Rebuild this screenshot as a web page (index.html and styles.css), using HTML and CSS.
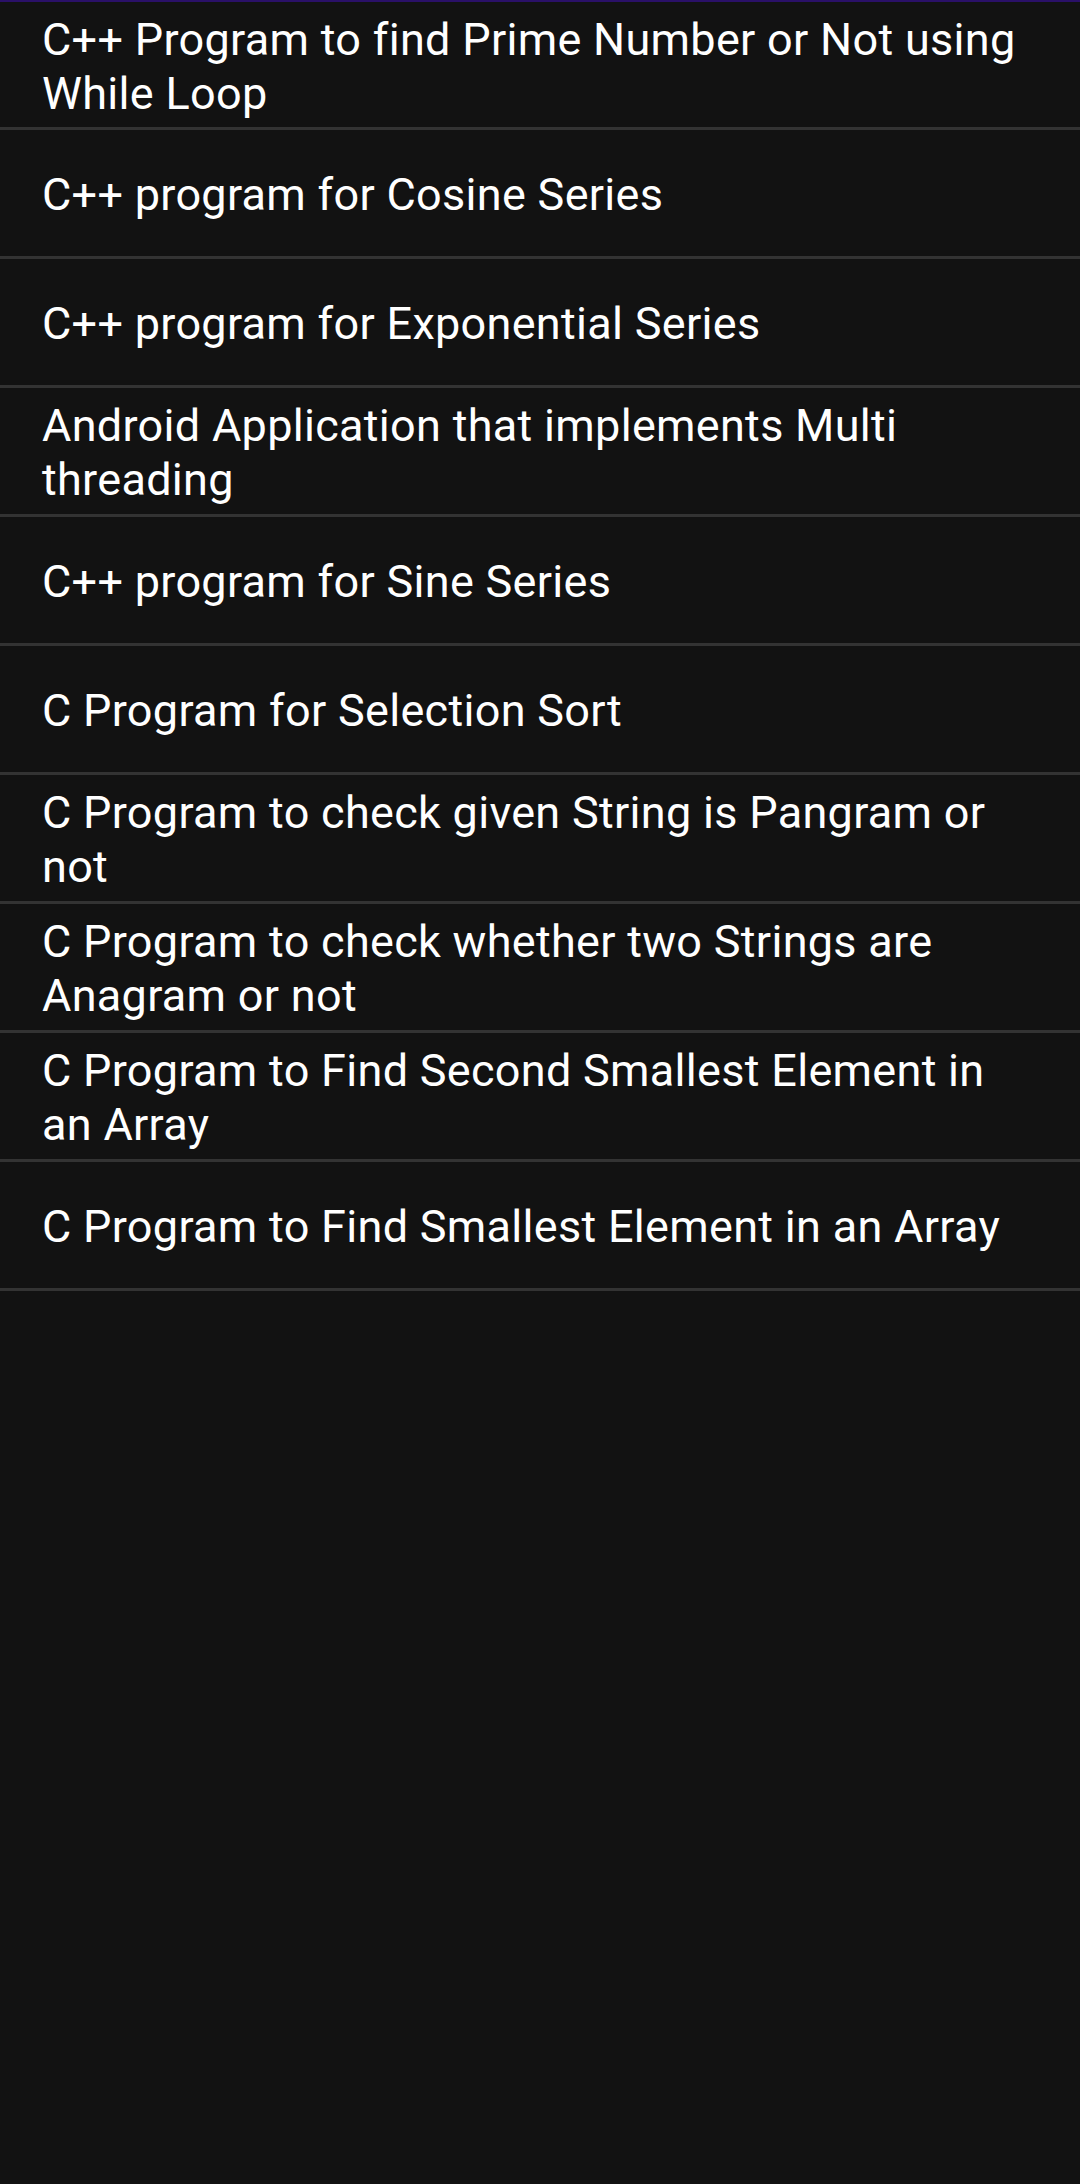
FILE: index.html
```html
<!DOCTYPE html>
<html lang="en">
<head>
<meta charset="utf-8">
<title>Programs</title>
<link rel="stylesheet" href="styles.css">
</head>
<body>
<div class="topbar"></div>
<ul class="list">
  <li class="row">C++ Program to find Prime Number or Not using While Loop</li>
  <li class="row">C++ program for Cosine Series</li>
  <li class="row">C++ program for Exponential Series</li>
  <li class="row">Android Application that implements Multi threading</li>
  <li class="row">C++ program for Sine Series</li>
  <li class="row">C Program for Selection Sort</li>
  <li class="row">C Program to check given String is Pangram or not</li>
  <li class="row">C Program to check whether two Strings are Anagram or not</li>
  <li class="row">C Program to Find Second Smallest Element in an Array</li>
  <li class="row">C Program to Find Smallest Element in an Array</li>
</ul>
</body>
</html>
```

FILE: styles.css
```css
html, body {
  margin: 0;
  padding: 0;
  background: #121212;
}
body {
  width: 1080px;
  min-height: 2184px;
  font-family: Roboto, "Noto Sans", "Liberation Sans", sans-serif;
  color: #ffffff;
}
.topbar {
  height: 2px;
  background: #2a1068;
}
.list {
  list-style: none;
  margin: 0;
  padding: 0;
}
.row {
  box-sizing: border-box;
  min-height: 129px;
  padding: 4px 48px 0 42px;
  border-bottom: 3px solid #333333;
  display: flex;
  align-items: center;
  font-size: 45px;
  letter-spacing: 0.3px;
  line-height: 54px;
}
.row:first-child {
  min-height: 128px;
}
```
